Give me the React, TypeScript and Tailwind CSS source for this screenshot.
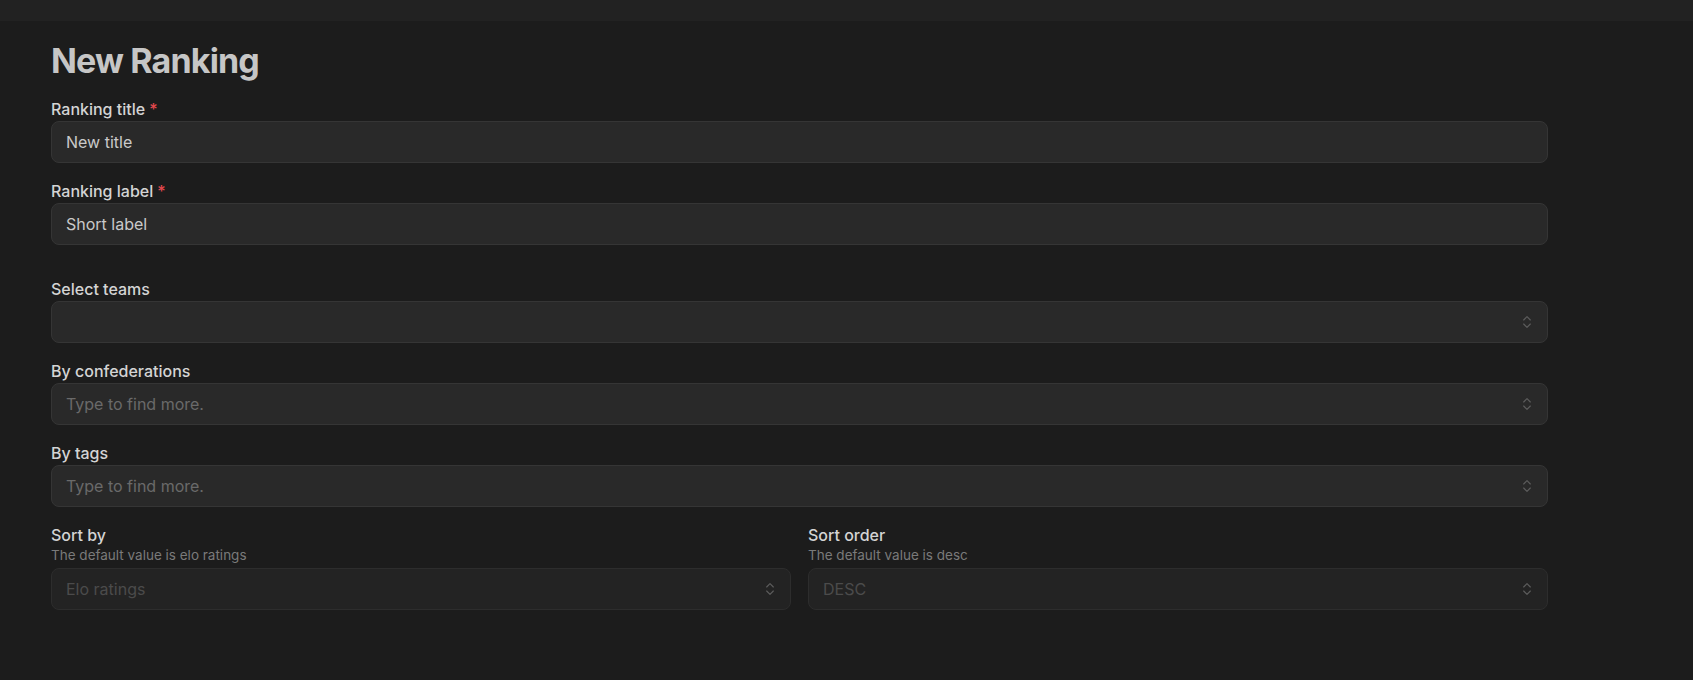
import { ChevronsUpDown } from 'lucide-react';

const font = { fontFamily: 'Inter, "Noto Sans", sans-serif' };

function Label({ text, required }: { text: string; required?: boolean }) {
  return (
    <label className="block text-base leading-6 font-medium text-[#d4d4d4]">
      {text}
      {required && <span className="ml-1 text-[#e5484d]">*</span>}
    </label>
  );
}

function TextInput({ value }: { value: string }) {
  return (
    <div className="h-[42px] flex items-center px-3.5 rounded-lg border border-[#353535] bg-[#292929] text-base text-[#c9c9c9]">
      {value}
    </div>
  );
}

function Select({ placeholder, disabled }: { placeholder?: string; disabled?: boolean }) {
  return (
    <div
      className={
        disabled
          ? 'h-[42px] flex items-center justify-between pl-3.5 pr-3 rounded-lg border border-[#2d2d2d] bg-[#232323] text-base text-[#4b4b4b]'
          : 'h-[42px] flex items-center justify-between pl-3.5 pr-3 rounded-lg border border-[#353535] bg-[#292929] text-base text-[#6a6a6a]'
      }
    >
      <span>{placeholder}</span>
      <ChevronsUpDown size={16} strokeWidth={1.75} className="text-[#5c5c5c]" />
    </div>
  );
}

export default function App() {
  return (
    <div className="min-h-screen bg-[#1c1c1c]" style={font}>
      <div className="h-[21px] bg-[#222222]" />
      <div className="px-[51px] pt-[20px]">
        <div className="max-w-[1497px]">
          <h1 className="text-[34px] leading-10 font-bold tracking-tight text-[#c6c6c6] mb-4">New Ranking</h1>

          <div className="flex flex-col gap-4">
            <div>
              <Label text="Ranking title" required />
              <TextInput value="New title" />
            </div>
            <div>
              <Label text="Ranking label" required />
              <TextInput value="Short label" />
            </div>

            <div className="mt-4">
              <Label text="Select teams" />
              <Select />
            </div>
            <div>
              <Label text="By confederations" />
              <Select placeholder="Type to find more." />
            </div>
            <div>
              <Label text="By tags" />
              <Select placeholder="Type to find more." />
            </div>

            <div className="grid grid-cols-2 gap-[17px]">
              <div>
                <Label text="Sort by" />
                <p className="mb-[5px] text-[13.5px] leading-4 text-[#7a7a7a]">The default value is elo ratings</p>
                <Select placeholder="Elo ratings" disabled />
              </div>
              <div>
                <Label text="Sort order" />
                <p className="mb-[5px] text-[13.5px] leading-4 text-[#7a7a7a]">The default value is desc</p>
                <Select placeholder="DESC" disabled />
              </div>
            </div>
          </div>
        </div>
      </div>
    </div>
  );
}
